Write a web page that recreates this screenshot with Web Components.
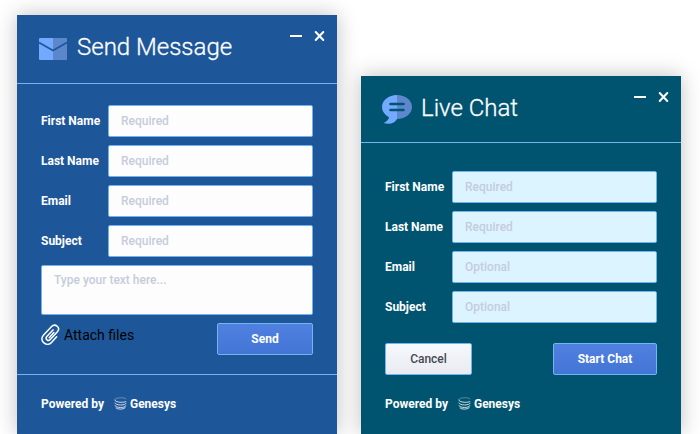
<!DOCTYPE html>
<html lang="en">
<head>
<meta charset="utf-8">
<title>Messaging widgets</title>
<style>
  body { margin: 0; background: #fff; font-family: Roboto, "Liberation Sans", sans-serif; font-size: 12px; }
</style>
</head>
<body>
<widget-stage>
  <chat-widget heading="Send Message" class="mail">
    <mail-icon slot="icon"></mail-icon>
    <form-field label="First Name" hint="Required"></form-field>
    <form-field label="Last Name" hint="Required"></form-field>
    <form-field label="Email" hint="Required"></form-field>
    <form-field label="Subject" hint="Required"></form-field>
    <message-box hint="Type your text here..."></message-box>
    <attach-files slot="actions"></attach-files>
    <action-button slot="actions" class="send">Send</action-button>
  </chat-widget>
  <chat-widget heading="Live Chat" class="chat">
    <chat-icon slot="icon"></chat-icon>
    <form-field label="First Name" hint="Required"></form-field>
    <form-field label="Last Name" hint="Required"></form-field>
    <form-field label="Email" hint="Optional"></form-field>
    <form-field label="Subject" hint="Optional"></form-field>
    <action-button slot="actions" class="cancel" plain>Cancel</action-button>
    <action-button slot="actions" class="start">Start Chat</action-button>
  </chat-widget>
</widget-stage>
<script>
const define = (name, render) => customElements.define(name, class extends HTMLElement {
  connectedCallback() {
    if (this.shadowRoot) return;
    const template = document.createElement('template');
    template.innerHTML = render(this);
    this.attachShadow({ mode: 'open' }).append(template.content.cloneNode(true));
  }
});

define('widget-stage', () => `
  <style>
    :host { display: flex; align-items: flex-end; gap: 24px; padding: 15px 19px 0 17px; }
    ::slotted(chat-widget) { flex: 1 1 0; min-width: 0; }
    ::slotted(.mail) { --panel: #1e5799; --field: #fdfdfd; --head: 68px; --top: 21px; --actions: 8px; --bottom: 19px; --rule: 1px; }
    ::slotted(.chat) { --panel: #005470; --field: #dcf4ff; --head: 66px; --top: 28px; --actions: 20px; --bottom: 0px; --rule: 0px; }
  </style>
  <slot></slot>`);

define('chat-widget', el => `
  <style>
    :host { display: block; background: var(--panel); color: #fff; box-shadow: 0 0 20px rgba(0,0,0,.25); }
    header { display: flex; align-items: flex-start; height: var(--head); border-bottom: 1px solid #75b5ee; padding: 0 11px 0 21px; }
    .title { flex: 1; display: flex; align-items: center; gap: 9px; padding-top: 16px; }
    h1 { margin: 0; font-size: 24px; line-height: 32px; font-weight: 300; white-space: nowrap; -webkit-text-stroke: 0.3px #fff; }
    .controls { display: flex; gap: 12px; padding-top: 15px; }
    button { display: flex; padding: 0; border: 0; background: none; color: inherit; }
    .body { display: grid; gap: 8px; padding: var(--top) 24px 0; }
    .actions { display: flex; justify-content: space-between; align-items: flex-start; padding: var(--actions) 24px var(--bottom); }
    footer { border-top: var(--rule) solid #75b5ee; padding: 20px 24px; }
  </style>
  <header>
    <div class="title"><slot name="icon"></slot><h1>${el.getAttribute('heading')}</h1></div>
    <div class="controls">
      <button type="button" aria-label="Minimize"><svg width="12" height="12" viewBox="0 0 12 12"><path d="M0 6h12" stroke="#fff" stroke-width="2"/></svg></button>
      <button type="button" aria-label="Close"><svg width="12" height="12" viewBox="0 0 12 12"><path d="M1.7 2l7.6 8M9.3 2l-7.6 8" stroke="#fff" stroke-width="2" stroke-linecap="round"/></svg></button>
    </div>
  </header>
  <div class="body"><slot></slot></div>
  <div class="actions"><slot name="actions"></slot></div>
  <footer><powered-by></powered-by></footer>`);

define('form-field', el => `
  <style>
    :host { display: grid; grid-template-columns: 67px 1fr; align-items: center; }
    label { font-weight: 700; line-height: 16px; white-space: nowrap; }
    input { box-sizing: border-box; width: 100%; min-width: 0; height: 32px; padding: 0 12px; border: 1px solid #6fb4ee; border-radius: 2px;
      background: var(--field); font: 500 12px Roboto, "Liberation Sans", sans-serif; color: #33383d; }
    input::placeholder { color: #c5ccdb; }
  </style>
  <label for="field">${el.getAttribute('label')}</label>
  <input id="field" type="text" placeholder="${el.getAttribute('hint')}">`);

define('message-box', el => `
  <style>
    :host { display: block; }
    textarea { display: block; box-sizing: border-box; width: 100%; height: 50px; padding: 6px 12px; border: 1px solid #6fb4ee; border-radius: 2px;
      background: var(--field); font: 500 12px/16px Roboto, "Liberation Sans", sans-serif; resize: none; }
    textarea::placeholder { color: #c5ccdb; }
  </style>
  <textarea aria-label="Message" placeholder="${el.getAttribute('hint')}"></textarea>`);

define('attach-files', () => `
  <style>
    :host { display: block; }
    button { display: flex; align-items: center; gap: 4px; padding: 0; border: 0; background: none; color: #000; font: 400 14px/24px Roboto, "Liberation Sans", sans-serif; }
    svg { display: block; }
  </style>
  <button type="button">
    <svg width="19" height="24" viewBox="0 0 19 24" fill="none" stroke="#fff" stroke-width="1.5" stroke-linecap="round" stroke-linejoin="round">
      <path d="M15.6 13.8L10.5 19.4C8.7 21.4 5.7 22.1 3.2 20.2C.5 18.2 .1 14.7 2.4 12.2L10.6 3.6C12.2 1.9 14.6 1.9 16.2 3.3C17.9 4.8 17.9 7 16.4 8.7L9.3 16.6C8.4 17.6 7 17.7 6 16.9C4.9 15.9 4.8 14.6 5.8 13.5L12 6.9"/>
      <path d="M12.9 9.5L8.2 14.7"/>
    </svg>Attach files</button>`);

define('action-button', () => `
  <style>
    :host { display: block; }
    :host(.send) { width: 96px; }
    :host(.cancel) { width: 87px; }
    :host(.start) { width: 104px; }
    button { display: block; box-sizing: border-box; width: 100%; height: 32px; padding: 0; border: 1px solid #75b5ee; border-radius: 2px;
      background: linear-gradient(#5081e1, #4375d6); color: #fff; font: 700 12px Roboto, "Liberation Sans", sans-serif; }
    :host([plain]) button { background: linear-gradient(#f5f8fc, #e9ebf1); color: #444a52; font-weight: 500; }
  </style>
  <button type="button"><slot></slot></button>`);

define('powered-by', () => `
  <style>
    :host { display: flex; align-items: center; font-weight: 700; line-height: 19px; white-space: nowrap; }
    svg { margin: 0 3px 2px 10px; }
  </style>
  <span>Powered by</span>
  <svg width="13" height="13" viewBox="0 0 13 13" fill="none" stroke="#fff" stroke-width=".8">
    <path d="M.8 3C.8 1.5 3.5.9 6.5.8S11.9 1 12.2 2.4" opacity=".4"/>
    <path d="M.8 2.8C1 5.8 11.8 6 12.2 4"/>
    <path d="M.8 5.6C1.2 8.6 11.8 8.8 12.2 5.8"/>
    <path d="M1 8.3C1.6 11.2 11.4 11.2 12 8.4"/>
    <path d="M1.8 10.8C3.6 12.6 9.4 12.6 11.4 10.6"/>
  </svg>
  <span>Genesys</span>`);

define('mail-icon', () => `
  <style>:host { display: flex; justify-content: center; width: 30px; padding-top: 4px; }</style>
  <svg width="28" height="22" viewBox="0 0 28 22">
    <path d="M1 0H14V22H1Q0 22 0 21V1Q0 0 1 0Z" fill="#73a9ff"/>
    <path d="M14 0H27Q28 0 28 1V21Q28 22 27 22H14Z" fill="#5d87cc"/>
    <path d="M0 4.5L14 12.5L28 4.5" fill="none" stroke="#1e5799" stroke-width="1.6"/>
  </svg>`);

define('chat-icon', () => `
  <style>:host { display: flex; justify-content: center; width: 30px; padding-top: 3px; }</style>
  <svg width="30" height="29" viewBox="0 0 30 29">
    <path d="M15 0C6.7 0 0 5.3 0 12C0 16.2 2.8 20 7 22.2C6.6 24.7 4.5 26.7 1.5 28C7.4 29.6 13 28.5 15 24Z" fill="#73a9ff"/>
    <path d="M15 0C23.3 0 30 5.3 30 12S23.3 24 15 24Z" fill="#5d87cc"/>
    <path d="M8.5 9H21.5M8.5 15H21.5" stroke="#005470" stroke-width="2.6" stroke-linecap="round"/>
  </svg>`);
</script>
</body>
</html>
